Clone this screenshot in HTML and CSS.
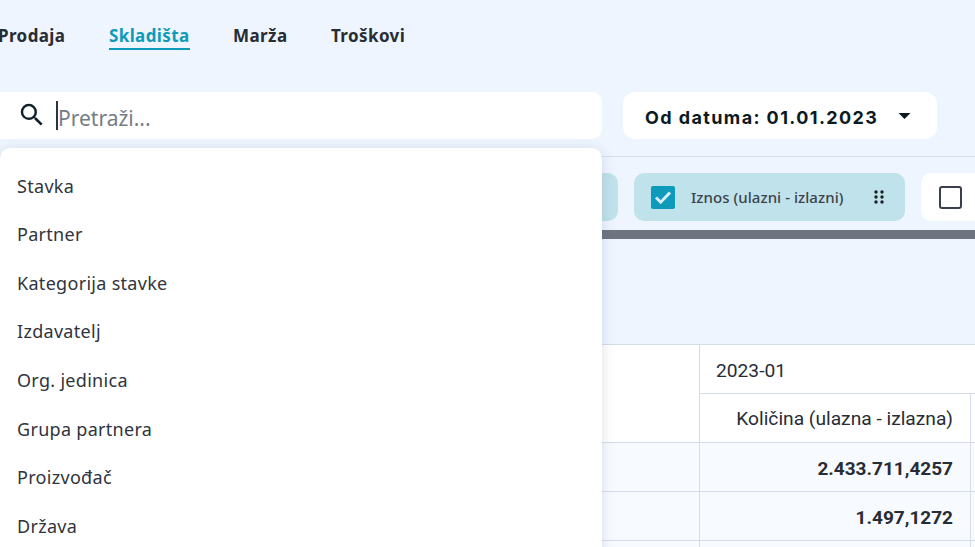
FILE: index.html
```html
<!DOCTYPE html>
<html lang="hr">
<head>
<meta charset="utf-8">
<title>Skladišta</title>
<link rel="stylesheet" href="styles.css">
</head>
<body>
<div class="page">
  <nav class="tabs">
    <a class="tab">Prodaja</a>
    <a class="tab active">Skladišta</a>
    <a class="tab">Marža</a>
    <a class="tab">Troškovi</a>
  </nav>
  <div class="toolbar">
    <div class="search">
      <svg class="search-icon" viewBox="0 0 24 24" width="30" height="30"><path d="M15.5 14h-.79l-.28-.27A6.47 6.47 0 0 0 16 9.5 6.5 6.5 0 1 0 9.5 16c1.61 0 3.09-.59 4.23-1.57l.27.28v.79l5 4.99L20.49 19l-4.99-5zm-6 0C7.01 14 5 11.99 5 9.5S7.01 5 9.5 5 14 7.01 14 9.5 11.99 14 9.5 14z"/></svg>
      <span class="caret"></span>
      <span class="placeholder">Pretraži...</span>
    </div>
    <div class="date">
      <span>Od datuma: 01.01.2023</span>
      <svg class="date-arrow" viewBox="0 0 12 6" width="13" height="6"><path d="M0 0h12L6 6z"/></svg>
    </div>
  </div>
  <div class="chips">
    <div class="chip chip-on chip-first"></div>
    <div class="chip chip-on chip-main">
      <span class="check">
        <svg viewBox="0 0 24 24" width="24" height="24"><path d="M5 12.5l4.7 4.7L19 7.5" fill="none" stroke="#d8eef4" stroke-width="3"/></svg>
      </span>
      <span class="chip-label">Iznos (ulazni - izlazni)</span>
      <svg class="grip" viewBox="0 0 10 14" width="10" height="14"><circle cx="2" cy="2" r="1.7"/><circle cx="8" cy="2" r="1.7"/><circle cx="2" cy="7" r="1.7"/><circle cx="8" cy="7" r="1.7"/><circle cx="2" cy="12" r="1.7"/><circle cx="8" cy="12" r="1.7"/></svg>
    </div>
    <div class="chip chip-off"><span class="box"></span></div>
  </div>
  <div class="scrollbar"></div>
  <div class="grid">
    <div class="corner"></div>
    <div class="cell period">2023-01</div>
    <div class="cell head">Količina (ulazna - izlazna)</div>
    <div class="cell head spare"></div>
    <div class="cell label"></div>
    <div class="cell num">2.433.711,4257</div>
    <div class="cell num spare"></div>
    <div class="cell label"></div>
    <div class="cell num">1.497,1272</div>
    <div class="cell num spare"></div>
    <div class="cell label"></div>
    <div class="cell num"></div>
    <div class="cell num spare"></div>
  </div>
  <ul class="dropdown">
    <li>Stavka</li>
    <li>Partner</li>
    <li>Kategorija stavke</li>
    <li>Izdavatelj</li>
    <li>Org. jedinica</li>
    <li>Grupa partnera</li>
    <li>Proizvođač</li>
    <li>Država</li>
  </ul>
</div>
</body>
</html>
```
FILE: styles.css
```css
* { box-sizing: border-box; }
html, body { margin: 0; padding: 0; }
body { background: #eef5ff; font-family: "Noto Sans", sans-serif; color: #282c34; overflow: hidden; }
.page { position: relative; width: 975px; height: 547px; overflow: hidden; }

.tabs { display: flex; gap: 43.5px; height: 92px; padding: 23px 0 0; margin-left: -2px; }
.tab { height: 27px; font-size: 17px; line-height: 25px; font-weight: 700; letter-spacing: 0.4px; color: #282c34; }
.tab.active { color: #0e9aba; border-bottom: 2px solid #0e9aba; }

.toolbar { display: flex; gap: 21px; height: 65px; border-bottom: 1px solid #d5dcec; align-items: flex-start; }
.search { width: 602px; height: 47px; background: #fff; border-radius: 0 10px 10px 0; display: flex; align-items: center; padding-left: 17px; }
.search-icon { fill: #10222c; flex: none; margin-top: -1px; }
.caret { width: 2px; height: 29px; background: #2c3440; margin-left: 9px; flex: none; }
.placeholder { font-size: 21px; color: #767c86; line-height: 29px; margin-top: 6px; }
.date { width: 314px; height: 47px; background: #fff; border-radius: 12px; display: flex; align-items: center; padding: 3px 0 0 22px; font-family: "Inter", sans-serif; font-weight: 700; font-size: 18px; letter-spacing: 1.4px; color: #0c1a22; }
.date-arrow { fill: #0c1a22; margin-left: 20px; margin-top: -3px; }

.chips { display: flex; gap: 16px; margin-top: 16px; height: 48px; }
.chip { height: 48px; border-radius: 10px; display: flex; align-items: center; flex: none; }
.chip-on { background: #c0e2ea; }
.chip-first { width: 618px; }
.chip-main { width: 271px; padding-left: 17px; }
.check { width: 24px; height: 23px; background: #0e9aba; border-radius: 2px; display: flex; align-items: center; justify-content: center; flex: none; }
.chip-label { font-size: 15px; font-weight: 500; letter-spacing: 0.05px; color: #3c424c; margin-left: 16px; white-space: nowrap; }
.grip { fill: #1a2028; margin-left: 30px; flex: none; }
.chip-off { width: 100px; background: #fff; padding-left: 18px; }
.box { width: 23px; height: 23px; border: 2px solid #3a404a; border-radius: 3px; background: #fff; }

.scrollbar { height: 9px; margin-top: 9px; background: #6e7480; }

.grid { margin-top: 105px; display: grid; grid-template-columns: 700px 271px 100px; grid-template-rows: 49px 49px 49px 49px 49px; border-top: 1px solid #d5dcec; font-family: "Roboto", sans-serif; font-size: 19.2px; color: #282c34; }
.corner { grid-row: span 2; background: #fff; border-right: 1px solid #d5dcec; border-bottom: 1px solid #d5dcec; }
.cell { border-bottom: 1px solid #d5dcec; display: flex; align-items: center; padding: 2px 17px 0; }
.period { grid-column: span 2; background: #fff; padding-left: 16px; }
.head { background: #fff; justify-content: flex-end; border-right: 1px solid #d5dcec; padding-top: 0; }
.label { background: #f7faff; border-right: 1px solid #d5dcec; }
.num { background: #f7faff; justify-content: flex-end; font-size: 19px; font-weight: 700; border-right: 1px solid #d5dcec; }
.spare { border-right: 0; }

.dropdown { position: absolute; left: 0; top: 148px; width: 602px; height: 420px; margin: 0; padding: 13.7px 0 0 17px; list-style: none; background: #fff; border-radius: 10px; box-shadow: 0 2px 14px rgba(60, 70, 90, 0.16); font-size: 18px; letter-spacing: 0.3px; color: #30343c; }
.dropdown li { height: 48.57px; line-height: 48px; }
```
